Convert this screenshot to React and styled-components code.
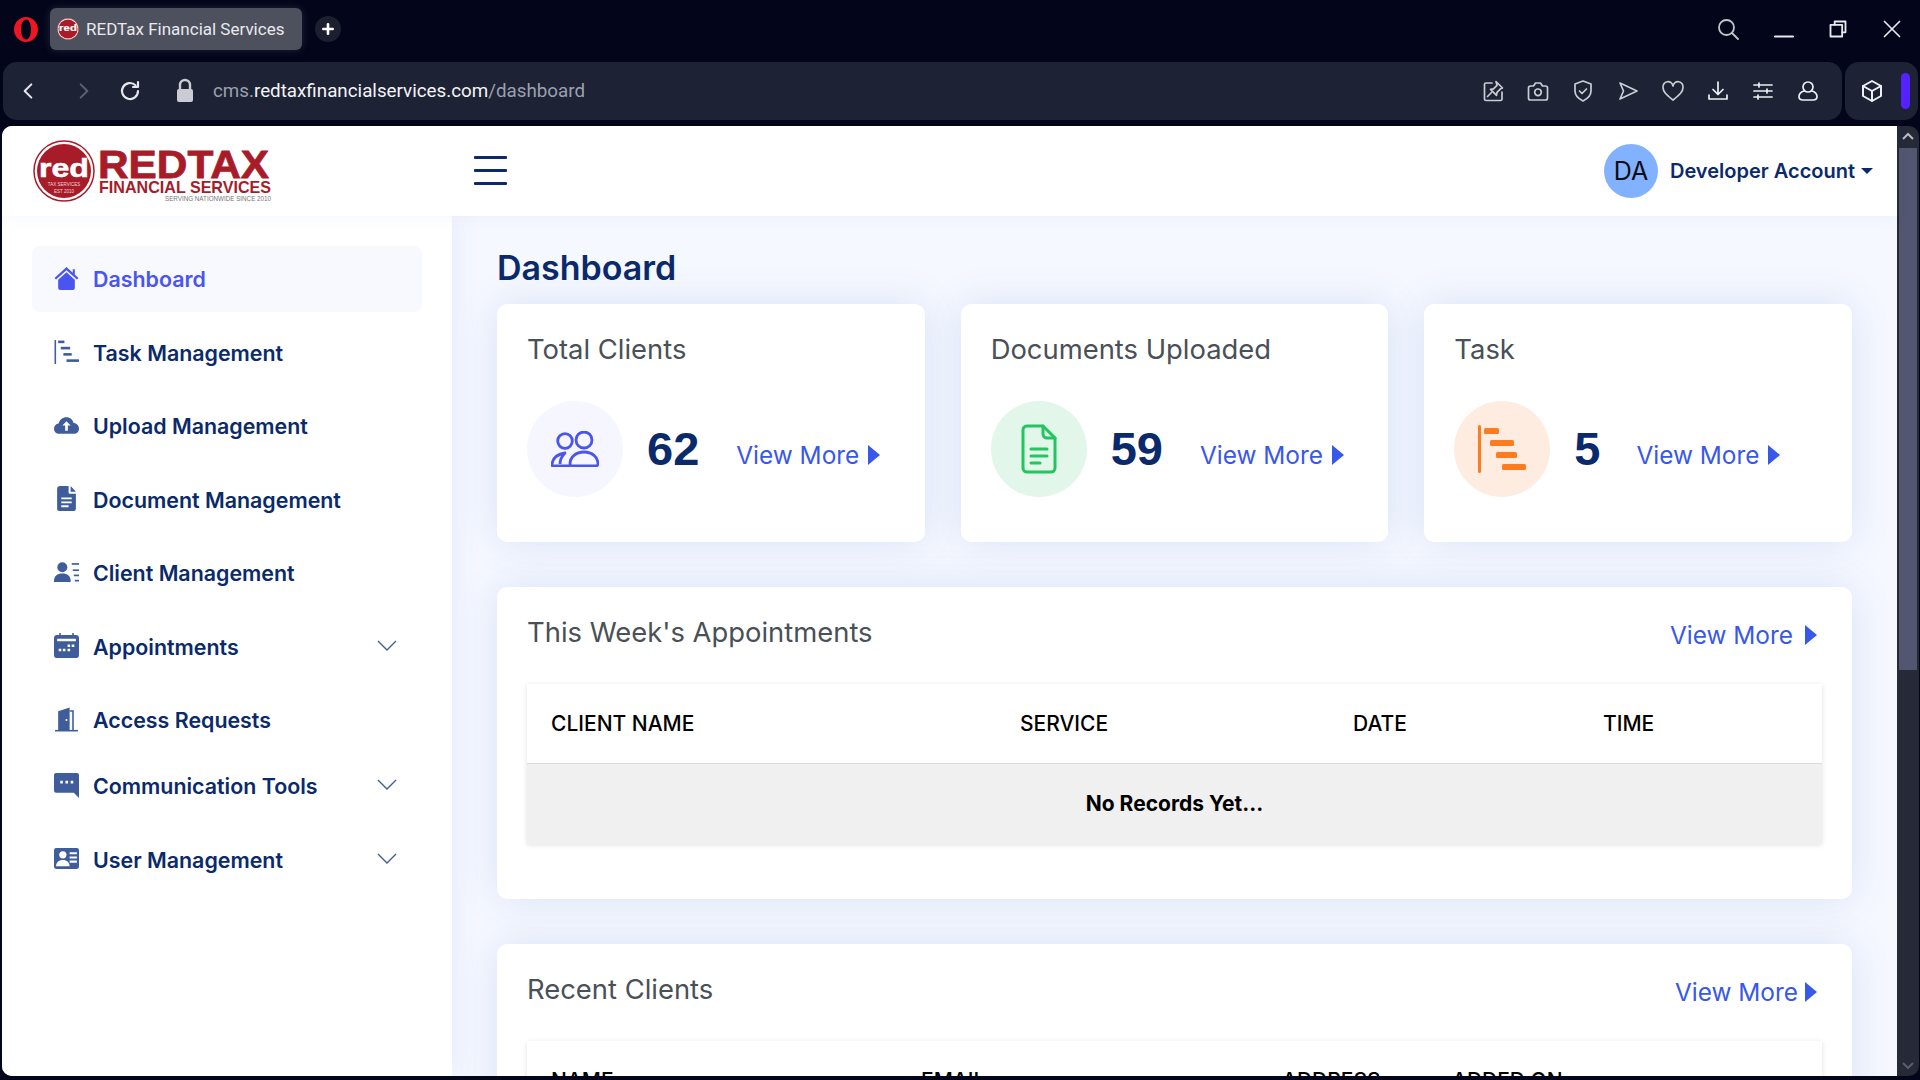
import React from "react";
import styled, { createGlobalStyle } from "styled-components";

const GlobalStyle = createGlobalStyle`
  html, body, #root { margin: 0; padding: 0; height: 100%; }
  body { background: #03061a; font-family: Inter, "Liberation Sans", sans-serif; overflow: hidden; }
  * { box-sizing: border-box; }
`;

const navy = "#0a2a6b";
const link = "#3858e9";
const muted = "#3f5d9b";

const Window = styled.div`
  width: 1920px;
  height: 1080px;
  display: flex;
  flex-direction: column;
  background: #03061a;
  padding-bottom: 4px;
  overflow: hidden;
`;

/* browser chrome */
const TabStrip = styled.div`
  height: 62px;
  flex: none;
  display: flex;
  align-items: flex-start;
  padding: 8px 18px 0 14px;
`;

const OperaLogo = styled.svg`
  width: 24px;
  height: 25px;
  margin: 9px 12px 0 0;
`;

const Tab = styled.div`
  width: 252px;
  height: 42px;
  display: flex;
  align-items: center;
  gap: 7px;
  padding-left: 7px;
  border-radius: 6px;
  background: #4d505d;
  color: #e8e9ee;
  font-family: Roboto, sans-serif;
  font-size: 17px;
  white-space: nowrap;
  box-shadow: 0 0 8px rgba(120, 125, 150, 0.25);
`;

const NewTab = styled.div`
  width: 26px;
  height: 26px;
  margin: 8px 0 0 13px;
  display: flex;
  align-items: center;
  justify-content: center;
  border-radius: 50%;
  background: #1b1f2e;
`;

const WindowControls = styled.div`
  margin-left: auto;
  display: flex;
  align-items: center;
  height: 34px;
  margin-top: 4px;
  gap: 34px;
`;

const Toolbar = styled.div`
  height: 58px;
  flex: none;
  display: flex;
  gap: 3px;
  padding: 0 2px 0 3px;
  margin-bottom: 6px;
`;

const AddressBar = styled.div`
  flex: 1;
  display: flex;
  align-items: center;
  padding-right: 22px;
  border-radius: 14px;
  background: #1e2235;
`;

const NavButtons = styled.div`
  display: grid;
  grid-template-columns: 50px 62px 30px;
  justify-items: center;
  align-items: center;
`;

const LockIcon = styled.svg`
  width: 20px;
  height: 26px;
  margin-left: 30px;
`;

const Url = styled.div`
  margin-left: 18px;
  font-family: Roboto, sans-serif;
  font-size: 18.8px;
  color: #9aa1ae;
  white-space: nowrap;
  b { font-weight: 400; color: #f4f5f7; }
`;

const ToolIcons = styled.div`
  margin-left: auto;
  display: flex;
  align-items: center;
  gap: 21px;
`;

const SideBox = styled.div`
  width: 73px;
  display: flex;
  align-items: center;
  justify-content: space-between;
  padding: 0 8px 0 15px;
  border-radius: 14px;
  background: #1e2235;
`;

const Pill = styled.div`
  width: 9px;
  height: 36px;
  border-radius: 5px;
  background: #5521ff;
`;

/* page */
const Viewport = styled.div`
  flex: 1;
  min-height: 0;
  display: flex;
  margin-left: 2px;
  margin-right: 1px;
  border-radius: 10px;
  overflow: hidden;
`;

const Page = styled.div`
  flex: 1;
  min-width: 0;
  display: flex;
  flex-direction: column;
  background: #f5f8ff;
`;

const Scrollbar = styled.div`
  width: 22px;
  flex: none;
  display: flex;
  flex-direction: column;
  align-items: center;
  background: #262936;
`;

const ScrollThumb = styled.div`
  width: 18px;
  height: 522px;
  margin-top: 8px;
  background: #535670;
`;

const ScrollArrow = styled.svg`
  width: 12px;
  height: 8px;
  margin-top: ${({ $top }) => $top}px;
`;

const TopBar = styled.header`
  height: 90px;
  flex: none;
  display: flex;
  align-items: center;
  background: #fff;
  position: relative;
  z-index: 2;
  box-shadow: 0 2px 14px rgba(60, 90, 170, 0.05);
`;

const Brand = styled.div`
  width: 472px;
  padding-left: 31px;
  display: flex;
  align-items: center;
  height: 100%;
`;

const Burger = styled.div`
  width: 33px;
  height: 29px;
  margin-top: -2px;
  display: flex;
  flex-direction: column;
  justify-content: space-between;
  span { height: 3px; border-radius: 1px; background: ${navy}; }
`;

const Account = styled.div`
  margin-left: auto;
  margin-right: 24px;
  display: flex;
  align-items: center;
  gap: 12px;
  color: ${navy};
  font-size: 20px;
  font-weight: 600;
`;

const Avatar = styled.div`
  width: 54px;
  height: 54px;
  display: flex;
  align-items: center;
  justify-content: center;
  border-radius: 50%;
  background: #82b1ff;
  color: #0b0d14;
  font-size: 25px;
  font-weight: 400;
`;

const Caret = styled.span`
  display: inline-block;
  margin-left: 6px;
  vertical-align: 4px;
  border-left: 6px solid transparent;
  border-right: 6px solid transparent;
  border-top: 6px solid ${navy};
`;

const Body = styled.div`
  flex: 1;
  min-height: 0;
  display: flex;
  overflow: hidden;
`;

const Sidebar = styled.nav`
  width: 450px;
  flex: none;
  padding: 30px 30px 0;
  background: #fff;
  box-shadow: 0 0 28px rgba(50, 90, 190, 0.1);
  position: relative;
  z-index: 1;
`;

const NavItem = styled.div`
  height: 66px;
  display: flex;
  align-items: center;
  gap: 14px;
  padding: 0 25px 0 22px;
  margin-bottom: ${({ $tight }) => ($tight ? 0 : 7.5)}px;
  border-radius: 8px;
  background: ${({ $active }) => ($active ? "#f7f9ff" : "transparent")};
  color: ${({ $active }) => ($active ? "#4a55f0" : navy)};
  font-size: 21.4px;
  font-weight: 600;
`;

const NavIcon = styled.svg`
  width: 25px;
  height: 25px;
  flex: none;
  margin-top: -2px;
  fill: currentColor;
  color: ${({ $active }) => ($active ? "#4a55f0" : muted)};
`;

const Chevron = styled.svg`
  width: 20px;
  height: 12px;
  margin-left: auto;
  margin-top: -2px;
`;

const Main = styled.main`
  flex: 1;
  min-width: 0;
  padding: 32px 45px 0;
  overflow: hidden;
`;

const Title = styled.h1`
  margin: 0 0 16px;
  height: 40px;
  line-height: 40px;
  font-size: 34px;
  font-weight: 600;
  color: ${navy};
`;

const Stats = styled.div`
  display: grid;
  grid-template-columns: repeat(3, 1fr);
  gap: 36px;
`;

const cardSurface = `
  background: #fff;
  border-radius: 10px;
  box-shadow: 0 0 40px rgba(50, 90, 190, 0.14);
`;

const StatCard = styled.section`
  ${cardSurface}
  height: 238px;
  padding: 28px 30px 0;
`;

const CardTitle = styled.h2`
  margin: 0;
  height: 34px;
  line-height: 34px;
  font-size: 27.4px;
  font-weight: 400;
  color: #495057;
`;

const StatRow = styled.div`
  display: flex;
  align-items: center;
  margin-top: 35px;
`;

const IconCircle = styled.div`
  width: 96px;
  height: 96px;
  flex: none;
  display: flex;
  align-items: center;
  justify-content: center;
  border-radius: 50%;
  background: ${({ $bg }) => $bg};
`;

const Count = styled.div`
  margin-left: 24px;
  margin-top: -2px;
  font-family: "Liberation Sans", Arial, sans-serif;
  font-weight: 700;
  font-size: 47px;
  color: ${navy};
`;

const MoreLink = styled.a`
  display: flex;
  align-items: center;
  gap: ${({ $gap }) => $gap || 9}px;
  margin-left: ${({ $left }) => $left || 0}px;
  color: ${link};
  font-size: 24.4px;
  white-space: nowrap;
`;

const StatLink = styled(MoreLink)`
  margin-top: 12px;
`;

const Triangle = styled.span`
  width: 0;
  height: 0;
  border-top: 10px solid transparent;
  border-bottom: 10px solid transparent;
  border-left: 12px solid ${link};
`;

const Panel = styled.section`
  ${cardSurface}
  height: ${({ $height }) => $height}px;
  margin-top: 45px;
  padding: 28px 30px 0;
`;

const PanelHead = styled.div`
  display: flex;
  justify-content: space-between;
  align-items: flex-start;
  padding-right: 5px;
  height: 69px;
`;

const HeadLink = styled(MoreLink)`
  margin-top: 5px;
`;

const Table = styled.div`
  background: #fff;
  box-shadow: 0 1px 5px rgba(0, 0, 0, 0.12);
`;

const HeadRow = styled.div`
  display: grid;
  grid-template-columns: ${({ $cols }) => $cols};
  height: 80px;
  align-items: center;
  padding-left: 24px;
  font-size: 21px;
  font-weight: 500;
  color: #000;
  border-bottom: 1px solid #dcdcdc;
`;

const EmptyRow = styled.div`
  height: 80px;
  padding-bottom: 2px;
  display: flex;
  align-items: center;
  justify-content: center;
  background: #f0f0f0;
  font-size: 21px;
  font-weight: 700;
  color: #000;
`;

/* icons */
const Line = ({ d, w = 24, h = 24, color = "#c9ccd2", sw = 1.7 }) => (
  <svg width={w} height={h} viewBox="0 0 24 24" fill="none" stroke={color} strokeWidth={sw} strokeLinecap="round" strokeLinejoin="round">
    {d.map((p) => <path key={p} d={p} />)}
  </svg>
);

const tools = [
  {
    d: [
      "M11 4H5a1.500 1.500 0 0 0-1.500 1.500V20A1.500 1.500 0 0 0 5 21.500h14.500A1.500 1.500 0 0 0 21 20v-7",
      "M15 2.500l6.500 6.500l-2 .8l-3.500 3.500l-.5 3l-6-6l3-.5l3.500-3.500z",
      "M10.500 13.500L6.500 17.500",
    ],
    color: "#c9ccd2",
  },
  { d: ["M2.500 9a2 2 0 0 1 2-2h3l2-3h5l2 3h3a2 2 0 0 1 2 2v10a2 2 0 0 1-2 2h-15a2 2 0 0 1-2-2z", "M12 10a3.300 3.300 0 1 0 0 6.600a3.300 3.300 0 0 0 0-6.600z"], color: "#c9ccd2" },
  { d: ["M12 2l8 3v7c0 5-4 8-8 10c-4-2-8-5-8-10V5z", "M8.500 12l2.500 2.500l4.500-4.500"], color: "#c9ccd2" },
  { d: ["M4 4l17 8L4 20l3.500-8z"], color: "#c9ccd2" },
  { d: ["M12 21C6 16 2 13 2 8.500a5 5 0 0 1 10-1.500a5 5 0 0 1 10 1.500C22 13 18 16 12 21z"], color: "#c9ccd2" },
  { d: ["M12 3v12M7 10.500l5 5l5-5", "M3 16v4h18v-4"], color: "#eef0f4" },
  { d: ["M3 6h18M3 12h18M3 18h18", "M8 4v4M16 10v4M7 16v4"], color: "#eef0f4" },
  { d: ["M12 3a5 5 0 1 0 0 10a5 5 0 0 0 0-10z", "M8 12c-3 1-5 3-5 5.500S5 21 7 21h10c2 0 4-1 4-3.500S19 13 16 12"], color: "#eef0f4" },
];

const RedSeal = ({ size, detail }) => (
  <svg width={size} height={size} viewBox="0 0 62 62">
    <circle cx="31" cy="31" r="30" fill="#fff" stroke="#a81c2a" strokeWidth="1.500" />
    <circle cx="31" cy="31" r="27" fill="#a81c2a" />
    <text x="31" y="37" textAnchor="middle" fontFamily="Liberation Sans" fontWeight="700" fontSize="25" fill="#fff" stroke="#fff" strokeWidth="0.500" textLength="50" lengthAdjust="spacingAndGlyphs">red</text>
    {detail && (
      <>
        <text x="31" y="46" textAnchor="middle" fontFamily="Liberation Sans" fontSize="4.500" fill="#f3d4d7">TAX SERVICES</text>
        <text x="31" y="53" textAnchor="middle" fontFamily="Liberation Sans" fontSize="4.500" fill="#f3d4d7">EST 2010</text>
      </>
    )}
  </svg>
);

const Logo = () => (
  <svg width="240" height="66" viewBox="0 0 240 66">
    <g transform="translate(0 2)"><RedSeal size={62} detail /></g>
    <text x="65" y="40" fontFamily="Liberation Sans" fontWeight="700" fontSize="39" fill="#a81c2a" stroke="#a81c2a" strokeWidth="0.800" textLength="171" lengthAdjust="spacingAndGlyphs">REDTAX</text>
    <text x="66" y="55" fontFamily="Liberation Sans" fontWeight="700" fontSize="17" fill="#a81c2a" textLength="172" lengthAdjust="spacingAndGlyphs">FINANCIAL SERVICES</text>
    <text x="132" y="63" fontFamily="Liberation Sans" fontSize="6.500" fill="#777" textLength="106" lengthAdjust="spacingAndGlyphs">SERVING NATIONWIDE SINCE 2010</text>
  </svg>
);

const navIcons = {
  home: (
    <>
      <path d="M12 1L.500 11.500L2 13L12 4l10 9l1.500-1.500l-3.500-3.200V3h-2v3.500z" />
      <path d="M12 6L4 13.200V21a2 2 0 0 0 2 2h12a2 2 0 0 0 2-2v-7.800z" />
    </>
  ),
  task: (
    <>
      <rect x="0.500" y="1" width="1.500" height="23" />
      <rect x="4" y="1.500" width="6" height="2.500" />
      <rect x="6.500" y="7.500" width="9" height="2.500" />
      <rect x="9" y="13.500" width="8" height="2.500" />
      <rect x="12" y="19.500" width="12" height="2.500" />
    </>
  ),
  upload: <path fillRule="evenodd" d="M12 4c3.500 0 6 2.300 6.600 5.300C21.700 9.800 24 12 24 15c0 3-2.400 5-5 5H5c-2.800 0-5-2.200-5-5c0-2.600 1.900-4.600 4.400-5C5.300 6.400 8.300 4 12 4zM12 8l-4 4h2.700v5h2.600v-5H16z" />,
  doc: <path fillRule="evenodd" d="M6 0h8v6c0 1 .6 1.500 1.500 1.500H21V22a2 2 0 0 1-2 2H5a2 2 0 0 1-2-2V3a3 3 0 0 1 3-3zm10 0l5 5.500h-5zM7 11v1.800h10V11zm0 3.800v1.800h10v-1.800zm0 3.700v1.800h7v-1.800z" />,
  client: (
    <>
      <circle cx="8" cy="7" r="4.800" />
      <path d="M0 20c0-4.500 3-7 8-7s8 2.500 8 7v1H0z" />
      <rect x="17" y="3" width="7" height="1.600" />
      <rect x="18" y="9" width="6" height="1.600" />
      <rect x="19" y="14" width="5" height="1.600" />
      <rect x="20" y="19" width="4" height="1.600" />
    </>
  ),
  calendar: <path fillRule="evenodd" d="M5 0h1.500v2h11V0H19v2h2a3 3 0 0 1 3 3v16a3 3 0 0 1-3 3H3a3 3 0 0 1-3-3V5a3 3 0 0 1 3-3h2zM3 5.500v2.500h18V5.500zM13 11v2.500h2.500V11zm4 0v2.500h2.500V11zM4.500 15v2.500H7V15zm4 0v2.500H11V15zm4.500 0v2.500h2.500V15z" />,
  door: (
    <>
      <path fillRule="evenodd" d="M4 4l11-3.500V22H4zM12 11.500a1 1 0 1 0 0 2a1 1 0 0 0 0-2z" />
      <path d="M15 3h4v19h-1.500V4.500H15z" />
      <rect x="1" y="22" width="22" height="1.500" />
    </>
  ),
  chat: <path fillRule="evenodd" d="M2 0h20a2 2 0 0 1 2 2v22l-5-5H2a2 2 0 0 1-2-2V2a2 2 0 0 1 2-2zm4 7.500v2.500h2.500V7.500zm5 0v2.500h2.500V7.500zm5 0v2.500h2.500V7.500z" />,
  card: <path fillRule="evenodd" d="M2 2h20a2 2 0 0 1 2 2v16a2 2 0 0 1-2 2H2a2 2 0 0 1-2-2V4a2 2 0 0 1 2-2zm6.500 3a3.500 3.500 0 1 0 0 7a3.500 3.500 0 0 0 0-7zM2 19.500h13c0-3.500-2.500-6-6.500-6S2 16 2 19.500zM15 6v2h7V6zm0 4v2h7v-2zm0 4v2h7v-2z" />,
};

const navItems = [
  { label: "Dashboard", icon: "home", active: true },
  { label: "Task Management", icon: "task" },
  { label: "Upload Management", icon: "upload" },
  { label: "Document Management", icon: "doc" },
  { label: "Client Management", icon: "client" },
  { label: "Appointments", icon: "calendar", more: true },
  { label: "Access Requests", icon: "door", tight: true },
  { label: "Communication Tools", icon: "chat", more: true },
  { label: "User Management", icon: "card", more: true },
];

const UsersIcon = () => (
  <svg width="48" height="36" viewBox="0 0 48 36" fill="none" stroke="#4a55f0" strokeWidth="2.800" strokeLinejoin="round">
    <circle cx="14" cy="10" r="7.300" />
    <circle cx="33" cy="9" r="8" />
    <path d="M19 35H2c-1 0-1-1-1-2c1-6 6-10 13-11c-3 3-5 7-5 11" />
    <path d="M19 33c0-7 6-12 14-12s14 5 14 12c0 1-1 2-2 2H21c-1 0-2-1-2-2z" />
  </svg>
);

const DocIcon = () => (
  <svg width="36" height="50" viewBox="0 0 36 50" fill="none" stroke="#22c55e" strokeWidth="3" strokeLinecap="round" strokeLinejoin="round">
    <path d="M22 2H6a4 4 0 0 0-4 4v38a4 4 0 0 0 4 4h24a4 4 0 0 0 4-4V14z" />
    <path d="M22 2v8a4 4 0 0 0 4 4h8" />
    <path d="M10 25h16M10 32h16M10 39h9" />
  </svg>
);

const GanttIcon = () => (
  <svg width="48" height="48" viewBox="0 0 48 48" fill="#fd7c1f">
    <rect x="0" y="0" width="3" height="48" rx="1.500" />
    <rect x="6" y="3" width="15" height="6" rx="1.500" />
    <rect x="12" y="15" width="24" height="6" rx="1.500" />
    <rect x="18" y="27" width="21" height="6" rx="1.500" />
    <rect x="24" y="39" width="24" height="6" rx="1.500" />
  </svg>
);

const stats = [
  { title: "Total Clients", value: "62", bg: "#f5f6ff", icon: <UsersIcon />, left: 37 },
  { title: "Documents Uploaded", value: "59", bg: "#e2f6ea", icon: <DocIcon />, left: 37 },
  { title: "Task", value: "5", bg: "#ffece0", icon: <GanttIcon />, left: 36 },
];

const apptCols = "469px 333px 250px 1fr";
const clientCols = "370px 361px 170px 1fr";

export default function App() {
  return (
    <Window>
      <GlobalStyle />
      <TabStrip>
        <OperaLogo viewBox="0 0 24 25">
          <path fillRule="evenodd" fill="#f01524" d="M12 0c6.600 0 12 5.600 12 12.500S18.600 25 12 25S0 19.400 0 12.500S5.400 0 12 0zm0 2.500c-3 0-5 4.500-5 10s2 10 5 10s5-4.500 5-10s-2-10-5-10z" />
        </OperaLogo>
        <Tab>
          <RedSeal size={22} />
          REDTax Financial Services
        </Tab>
        <NewTab>
          <Line d={["M12 5v14M5 12h14"]} w={16} h={16} color="#fff" sw={4} />
        </NewTab>
        <WindowControls>
          <Line d={["M10.500 3a7.500 7.500 0 1 0 0 15a7.500 7.500 0 0 0 0-15z", "M16 16l6 6"]} w={24} h={24} color="#c4c6cc" sw={1.800} />
          <Line d={["M1 21h22"]} w={20} h={20} color="#e8e9ee" sw={2.200} />
          <Line d={["M8 7V3h13v13h-4", "M3 7h14v14H3z"]} w={20} h={20} color="#e8e9ee" sw={2.200} />
          <Line d={["M3 3l18 18M21 3L3 21"]} w={20} h={20} color="#e8e9ee" sw={2} />
        </WindowControls>
      </TabStrip>

      <Toolbar>
        <AddressBar>
          <NavButtons>
            <Line d={["M16 4l-8 8l8 8"]} color="#e6e7ec" w={20} h={20} sw={2.400} />
            <Line d={["M8 4l8 8l-8 8"]} color="#5c6070" w={20} h={20} sw={2.400} />
            <Line d={["M20 12a8 8 0 1 1-2.500-5.800", "M20 3v5h-5"]} color="#e6e7ec" w={24} h={24} sw={2.200} />
          </NavButtons>
          <LockIcon viewBox="0 0 20 26">
            <path fill="none" stroke="#c9ccd2" strokeWidth="2.400" d="M5 12V7a5 5 0 0 1 10 0v5" />
            <rect x="2" y="11" width="16" height="13" rx="2" fill="#c9ccd2" />
          </LockIcon>
          <Url>cms.<b>redtaxfinancialservices.com</b>/dashboard</Url>
          <ToolIcons>
            {tools.map((t) => (
              <Line key={t.d[0]} d={t.d} color={t.color} />
            ))}
          </ToolIcons>
        </AddressBar>
        <SideBox>
          <Line d={["M12 2l9 5v10l-9 5l-9-5V7z", "M3 7l9 5l9-5M12 12v10"]} color="#eef0f4" sw={2} />
          <Pill />
        </SideBox>
      </Toolbar>

      <Viewport>
        <Page>
          <TopBar>
            <Brand><Logo /></Brand>
            <Burger><span /><span /><span /></Burger>
            <Account>
              <Avatar>DA</Avatar>
              <div>Developer Account<Caret /></div>
            </Account>
          </TopBar>
          <Body>
            <Sidebar>
              {navItems.map((item) => (
                <NavItem key={item.label} $active={item.active} $tight={item.tight}>
                  <NavIcon viewBox="0 0 24 24" $active={item.active}>{navIcons[item.icon]}</NavIcon>
                  {item.label}
                  {item.more && (
                    <Chevron viewBox="0 0 20 12" fill="none" stroke={muted} strokeWidth="1.400">
                      <path d="M1 1l9 9l9-9" />
                    </Chevron>
                  )}
                </NavItem>
              ))}
            </Sidebar>
            <Main>
              <Title>Dashboard</Title>
              <Stats>
                {stats.map((s) => (
                  <StatCard key={s.title}>
                    <CardTitle>{s.title}</CardTitle>
                    <StatRow>
                      <IconCircle $bg={s.bg}>{s.icon}</IconCircle>
                      <Count>{s.value}</Count>
                      <StatLink $left={s.left}>View More <Triangle /></StatLink>
                    </StatRow>
                  </StatCard>
                ))}
              </Stats>
              <Panel $height={312}>
                <PanelHead>
                  <CardTitle>This Week's Appointments</CardTitle>
                  <HeadLink $gap={12}>View More <Triangle /></HeadLink>
                </PanelHead>
                <Table>
                  <HeadRow $cols={apptCols}>
                    <span>CLIENT NAME</span><span>SERVICE</span><span>DATE</span><span>TIME</span>
                  </HeadRow>
                  <EmptyRow>No Records Yet...</EmptyRow>
                </Table>
              </Panel>
              <Panel $height={300}>
                <PanelHead>
                  <CardTitle>Recent Clients</CardTitle>
                  <HeadLink $gap={7}>View More <Triangle /></HeadLink>
                </PanelHead>
                <Table>
                  <HeadRow $cols={clientCols}>
                    <span>NAME</span><span>EMAIL</span><span>ADDRESS</span><span>ADDED ON</span>
                  </HeadRow>
                </Table>
              </Panel>
            </Main>
          </Body>
        </Page>
        <Scrollbar>
          <ScrollArrow $top={6} viewBox="0 0 12 8" fill="none" stroke="#b9bbc4" strokeWidth="2"><path d="M1 7l5-5l5 5" /></ScrollArrow>
          <ScrollThumb />
          <ScrollArrow $top={392} viewBox="0 0 12 8" fill="none" stroke="#5b5e6c" strokeWidth="2"><path d="M1 1l5 5l5-5" /></ScrollArrow>
        </Scrollbar>
      </Viewport>
    </Window>
  );
}
